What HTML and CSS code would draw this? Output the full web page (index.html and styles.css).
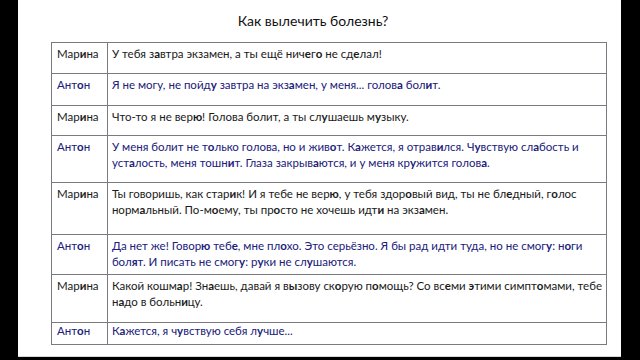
FILE: index.html
```html
<!DOCTYPE html>
<html lang="ru">
<head>
<meta charset="utf-8">
<link rel="stylesheet" href="styles.css">
</head>
<body>
<div class="sheet">
  <h1 class="title">Как вылечить болезнь?</h1>
  <table class="dialog">
    <tr class="r1 marina"><td class="who">Мар<b>и</b>на</td><td class="line">У тебя з<b>а</b>втра экзамен, а ты ещё нич<b>е</b>г<b>о</b> не сд<b>е</b>лал!</td></tr>
    <tr class="r2 anton"><td class="who">Ант<b>о</b>н</td><td class="line">Я не могу, не пойд<b>у</b> завтра на экз<b>а</b>мен, у меня... голов<b>а</b> бол<b>и</b>т.</td></tr>
    <tr class="r3 marina"><td class="who">Мар<b>и</b>на</td><td class="line">Что-то я не вер<b>ю</b>! Голова болит, а ты сл<b>у</b>шаешь м<b>у</b>зыку.</td></tr>
    <tr class="r4 anton"><td class="who">Ант<b>о</b>н</td><td class="line">У меня болит не т<b>о</b>лько голова, но и жив<b>о</b>т. К<b>а</b>жется, я отрав<b>и</b>лся. Ч<b>у</b>вствую сл<b>а</b>бость и<br>уст<b>а</b>лость, меня тошн<b>и</b>т. Глаза закрыв<b>а</b>ются, и у меня кр<b>у</b>жится голов<b>а</b>.</td></tr>
    <tr class="r5 marina"><td class="who">Мар<b>и</b>на</td><td class="line">Ты говоришь, как стар<b>и</b>к! И я тебе не вер<b>ю</b>, у тебя здор<b>о</b>вый вид, ты не бл<b>е</b>дный, г<b>о</b>лос<br>норм<b>а</b>льный. По-м<b>о</b>ему, ты пр<b>о</b>сто не хочешь идт<b>и</b> на экз<b>а</b>мен.</td></tr>
    <tr class="r6 anton"><td class="who">Ант<b>о</b>н</td><td class="line">Да нет же! Говор<b>ю</b> теб<b>е</b>, мне пл<b>о</b>хо. Это серьёзно. Я бы рад идти туда, но не смог<b>у</b>: н<b>о</b>ги<br>бол<b>я</b>т. И писать не смог<b>у</b>: р<b>у</b>ки не сл<b>у</b>шаются.</td></tr>
    <tr class="r7 marina"><td class="who">Мар<b>и</b>на</td><td class="line">Какой кошм<b>а</b>р! Зн<b>а</b>ешь, давай я в<b>ы</b>зову ск<b>о</b>рую п<b>о</b>мощь? Со вс<b>е</b>ми <b>э</b>тими симпт<b>о</b>мами, тебе<br>н<b>а</b>до в больн<b>и</b>цу.</td></tr>
    <tr class="r8 anton"><td class="who">Ант<b>о</b>н</td><td class="line">К<b>а</b>жется, я ч<b>у</b>вствую себя л<b>у</b>чше...</td></tr>
  </table>
</div>
</body>
</html>
```

FILE: styles.css
```css
html, body {
  margin: 0;
  padding: 0;
  background: #000;
  height: 360px;
  overflow: hidden;
}
.sheet {
  margin: 0 19px 0 18px;
  height: 357px;
  background: #fff;
  border-bottom: 1px solid #d8d8d8;
  padding: 11px 0 0 33px;
  box-sizing: border-box;
  font-family: Lato, "Noto Sans", sans-serif;
}
.title {
  margin: 0 0 11px 0;
  width: 524px;
  text-align: center;
  font-size: 14px;
  font-weight: normal;
  color: #111;
  line-height: 20px;
}
.dialog {
  border-collapse: collapse;
  width: 556px;
  font-size: 11.5px;
  line-height: 16px;
}
.dialog td {
  border: 1px solid #7a7a80;
  vertical-align: top;
  padding: 3px 4px 0 4px;
  box-sizing: border-box;
  white-space: nowrap;
}
.dialog .who {
  width: 57px;
  padding-left: 5px;
}
.dialog b {
  font-weight: bold;
}
.marina td { color: #1a1a1a; }
.anton td { color: #20207a; }
.r1 { height: 31px; }
.r2 { height: 32px; }
.r3 { height: 30px; }
.r4 { height: 47px; }
.r5 { height: 52px; }
.r6 { height: 40px; }
.r7 { height: 48px; }
.r8 { height: 22px; }
.r8 td { padding-top: 0; }
```
